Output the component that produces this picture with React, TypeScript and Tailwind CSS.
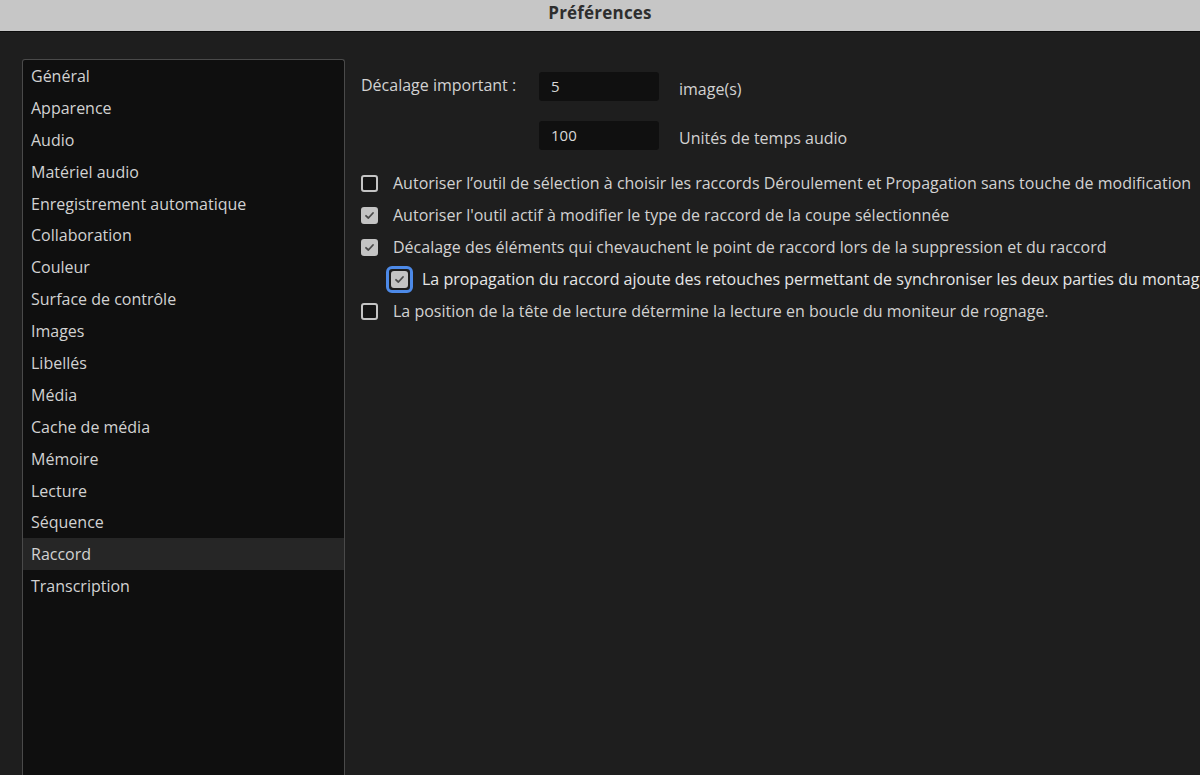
import React from 'react';

const items = [
  'Général',
  'Apparence',
  'Audio',
  'Matériel audio',
  'Enregistrement automatique',
  'Collaboration',
  'Couleur',
  'Surface de contrôle',
  'Images',
  'Libellés',
  'Média',
  'Cache de média',
  'Mémoire',
  'Lecture',
  'Séquence',
  'Raccord',
  'Transcription',
];

const Check: React.FC<{ checked: boolean }> = ({ checked }) => (
  <span
    className={`flex h-[17px] w-[17px] shrink-0 items-center justify-center rounded-[3px] border-2 border-[#c4c4c4] ${
      checked ? 'bg-[#c4c4c4]' : 'bg-[#141414]'
    }`}
  >
    {checked && (
      <svg width="11" height="11" viewBox="0 0 11 11" fill="none">
        <path d="M2 5.8 L4.4 8 L9 3" stroke="#4a4a4a" strokeWidth="1.8" strokeLinecap="round" strokeLinejoin="round" />
      </svg>
    )}
  </span>
);

const options = [
  { text: "Autoriser l’outil de sélection à choisir les raccords Déroulement et Propagation sans touche de modification", checked: false },
  { text: "Autoriser l'outil actif à modifier le type de raccord de la coupe sélectionnée", checked: true },
  { text: 'Décalage des éléments qui chevauchent le point de raccord lors de la suppression et du raccord', checked: true },
];

export default function App() {
  return (
    <div
      className="flex h-[775px] w-[1200px] flex-col overflow-hidden bg-[#1e1e1e] text-[#d2d2d2]"
      style={{ fontFamily: '"Open Sans", "Noto Sans", sans-serif' }}
    >
      {/* Title bar */}
      <div className="flex h-[32px] shrink-0 justify-center border-b border-[#0c0c0c] bg-[#c6c6c6]">
        <span className="text-[17px] font-bold tracking-[0.2px] text-[#2e2e2e]">Préférences</span>
      </div>

      <div className="flex flex-1 pl-[22px] pt-[27px]">
        {/* Sidebar */}
        <div className="w-[323px] shrink-0 rounded-t-[3px] border border-b-0 border-[#4a4a4a] bg-[#0f0f0f]">
          {items.map((item) => (
            <div
              key={item}
              className={`flex h-[31.9px] items-center pl-[8px] text-[16px] ${
                item === 'Raccord' ? 'bg-[#262626]' : ''
              }`}
            >
              {item}
            </div>
          ))}
        </div>

        {/* Content */}
        <div className="min-w-0 flex-1 overflow-hidden whitespace-nowrap pl-[16px] pt-[13px] text-[16px]">
          <div className="flex items-start">
            <span className="mt-[1px] w-[178px]">Décalage important :</span>
            <div className="flex flex-col gap-[20px]">
              <div className="flex items-center">
                <div className="flex h-[29px] w-[120px] items-center rounded-[3px] bg-[#101010] pl-[12px] text-[15px] text-[#d8d8d8]">5</div>
                <span className="ml-[20px] mt-[4px]">image(s)</span>
              </div>
              <div className="flex items-center">
                <div className="flex h-[29px] w-[120px] items-center rounded-[3px] bg-[#101010] pl-[12px] text-[15px] text-[#d8d8d8]">100</div>
                <span className="ml-[20px] mt-[4px]">Unités de temps audio</span>
              </div>
            </div>
          </div>

          <div className="mt-[17px] flex flex-col">
            {options.map((o) => (
              <div key={o.text} className="flex h-[32px] items-center gap-[15px]">
                <Check checked={o.checked} />
                <span>{o.text}</span>
              </div>
            ))}
            <div className="flex h-[32px] items-center gap-[9px] pl-[25px]">
              <span className="rounded-[6px] border-[3px] border-[#4d8ae8] p-[2px]">
                <Check checked />
              </span>
              <span className="text-[#e6e6e6]">
                La propagation du raccord ajoute des retouches permettant de synchroniser les deux parties du montage
              </span>
            </div>
            <div className="flex h-[32px] items-center gap-[15px]">
              <Check checked={false} />
              <span>La position de la tête de lecture détermine la lecture en boucle du moniteur de rognage.</span>
            </div>
          </div>
        </div>
      </div>
    </div>
  );
}
